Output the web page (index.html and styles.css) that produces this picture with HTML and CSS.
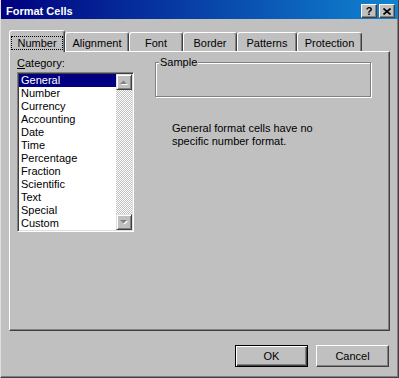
FILE: index.html
```html
<!DOCTYPE html>
<html>
<head>
  <meta name="viewport" content="width=device-width, initial-scale=1.0">
  <title>Format Cells</title>
  <link rel="stylesheet" href="styles.css">
</head>

<body>
  <div class="window">
    <div class="titlebar">
      <span class="title">Format Cells</span>
      <div class="caption-buttons">
        <span class="cap-btn cap-help">?</span>
        <span class="cap-btn">
          <svg width="8" height="7" viewBox="0 0 8 7"><path d="M0.5 0.5L7.5 6.5M7.5 0.5L0.5 6.5" stroke="#000" stroke-width="1.6"/></svg>
        </span>
      </div>
    </div>

    <div class="dialog">
      <div class="tabs">
        <div class="tab tab-number active"><span class="focus">Number</span></div>
        <div class="tab tab-alignment">Alignment</div>
        <div class="tab tab-font">Font</div>
        <div class="tab tab-border">Border</div>
        <div class="tab tab-patterns">Patterns</div>
        <div class="tab tab-protection">Protection</div>
      </div>

      <div class="panel">
        <div class="left">
          <div class="category-label"><u>C</u>ategory:</div>
          <div class="listbox">
            <div class="items">
              <div class="item selected">General</div>
              <div class="item">Number</div>
              <div class="item">Currency</div>
              <div class="item">Accounting</div>
              <div class="item">Date</div>
              <div class="item">Time</div>
              <div class="item">Percentage</div>
              <div class="item">Fraction</div>
              <div class="item">Scientific</div>
              <div class="item">Text</div>
              <div class="item">Special</div>
              <div class="item">Custom</div>
            </div>
            <div class="scrollbar">
              <div class="sb-btn">
                <svg width="8" height="5" viewBox="0 0 8 5"><path d="M1 5L4.5 1.5L8 5Z" fill="#fff"/><path d="M0 4L3.5 0.5L7 4Z" fill="#808080"/></svg>
              </div>
              <div class="sb-track"></div>
              <div class="sb-btn">
                <svg width="8" height="5" viewBox="0 0 8 5"><path d="M1 1L8 1L4.5 4.5Z" fill="#fff"/><path d="M0 0L7 0L3.5 3.5Z" fill="#808080"/></svg>
              </div>
            </div>
          </div>
        </div>

        <div class="right">
          <fieldset class="sample">
            <legend>Sample</legend>
            <div class="sample-box"></div>
          </fieldset>
          <div class="description">
            General format cells have no<br>
            specific number format.
          </div>
        </div>
      </div>

      <div class="footer">
        <button class="btn btn-default" type="button">OK</button>
        <button class="btn" type="button">Cancel</button>
      </div>
    </div>
  </div>
</body>
</html>
```

FILE: styles.css
```css
* {
  box-sizing: border-box;
}

body {
  margin: 0;
  padding: 0;
  font-family: "Liberation Sans", Arial, sans-serif;
  font-size: 11px;
  color: #000;
  background-color: #c0c0c0;
}

.window {
  width: 399px;
  height: 378px;
  display: flex;
  flex-direction: column;
  background-color: #c0c0c0;
  border-left: 1px solid #dfdfdf;
  border-right: 1px solid #404040;
  border-bottom: 1px solid #404040;
  box-shadow: inset -1px -1px 0 #808080;
}

/* title bar */

.titlebar {
  height: 19px;
  display: flex;
  align-items: flex-start;
  padding: 0 3px 0 5px;
  background: linear-gradient(to right, #000080, #1084d0);
  color: #fff;
  font-weight: bold;
}

.title {
  flex: 1;
  padding-top: 4px;
  line-height: 15px;
}

.caption-buttons {
  display: flex;
  gap: 2px;
  margin-top: 4px;
}

.cap-btn {
  width: 16px;
  height: 14px;
  display: flex;
  align-items: center;
  justify-content: center;
  background-color: #c0c0c0;
  border: 1px solid;
  border-color: #fff #404040 #404040 #fff;
  box-shadow: inset -1px -1px 0 #808080;
  color: #000;
}

.cap-help {
  font-size: 11px;
  line-height: 12px;
}

/* dialog body */

.dialog {
  flex: 1;
  padding: 11px 0 0 8px;
}

.tabs {
  display: flex;
  align-items: flex-end;
  height: 21px;
}

.tab {
  height: 19px;
  padding-top: 4px;
  line-height: 13px;
  text-align: center;
  border: 1px solid;
  border-bottom: none;
  border-color: #fff #404040 #404040 #fff;
  border-radius: 3px 3px 0 0;
  box-shadow: inset -1px 0 0 #808080;
  background-color: #c0c0c0;
}

.tab.active {
  height: 22px;
  margin-bottom: -1px;
  padding-top: 5px;
  position: relative;
  z-index: 1;
}

.focus {
  display: inline-block;
  line-height: 12px;
  padding: 0 5px;
  border: 1px dotted #000;
}

.tab-number { width: 56px; }
.tab-alignment { width: 64px; }
.tab-font { width: 54px; }
.tab-border { width: 54px; }
.tab-patterns { width: 60px; }
.tab-protection { width: 65px; }

.panel {
  width: 381px;
  height: 280px;
  display: flex;
  padding: 5px 0 0 7px;
  border-top: 1px solid #fff;
  border-left: 1px solid #fff;
  border-right: 1px solid #404040;
  border-bottom: 1px solid #404040;
  box-shadow: inset -1px -1px 0 #808080;
}

/* category list */

.category-label {
  line-height: 13px;
  margin-bottom: 2px;
}

.listbox {
  width: 117px;
  height: 160px;
  display: flex;
  padding: 1px;
  background-color: #fff;
  border: 1px solid;
  border-color: #808080 #fff #fff #808080;
  box-shadow: inset 1px 1px 0 #404040, inset -1px -1px 0 #dfdfdf;
  overflow: hidden;
}

.items {
  flex: 1;
}

.item {
  line-height: 13px;
  padding-left: 2px;
  white-space: nowrap;
}

.item.selected {
  background-color: #000080;
  color: #fff;
}

.scrollbar {
  width: 16px;
  display: flex;
  flex-direction: column;
  background: repeating-conic-gradient(#c0c0c0 0% 25%, #fff 0% 50%) 0 0 / 2px 2px;
}

.sb-btn {
  width: 16px;
  height: 16px;
  display: flex;
  align-items: center;
  justify-content: center;
  background-color: #c0c0c0;
  border: 1px solid;
  border-color: #dfdfdf #404040 #404040 #dfdfdf;
  box-shadow: inset 1px 1px 0 #fff, inset -1px -1px 0 #808080;
}

.sb-track {
  flex: 1;
}

/* sample + description */

.right {
  margin-left: 21px;
  margin-top: -1px;
}

.sample {
  width: 216px;
  margin: 0;
  padding: 0;
  border: 1px solid #808080;
  box-shadow: 1px 1px 0 #fff, inset 1px 1px 0 #fff;
}

.sample legend {
  margin-left: 3px;
  padding: 0 1px;
  line-height: 13px;
  background-color: #c0c0c0;
}

.sample-box {
  height: 27px;
}

.description {
  margin-top: 25px;
  padding-left: 17px;
  line-height: 13px;
}

/* buttons */

.footer {
  display: flex;
  justify-content: flex-end;
  gap: 8px;
  padding: 14px 9px 0 0;
}

.btn {
  width: 73px;
  height: 22px;
  padding: 0;
  font: inherit;
  color: #000;
  background-color: #c0c0c0;
  border: 1px solid;
  border-color: #fff #404040 #404040 #fff;
  box-shadow: inset -1px -1px 0 #808080;
}

.btn-default {
  border-color: #000;
  box-shadow: inset 1px 1px 0 #fff, inset -1px -1px 0 #404040, inset -2px -2px 0 #808080;
}
```
